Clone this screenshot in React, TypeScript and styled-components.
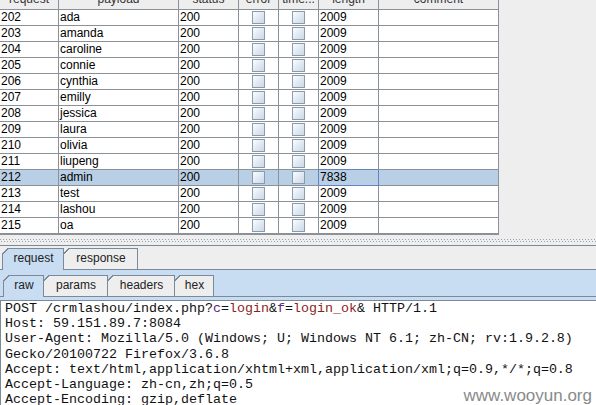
import React from 'react';
import styled, { createGlobalStyle } from 'styled-components';

const Global = createGlobalStyle`
  html, body { margin: 0; padding: 0; background: #eeeeee; }
  body { width: 596px; height: 405px; overflow: hidden; }
`;

const BORDER = '#7a8a99';
const GRID = '#8a9199';
const BLUE = '#c8ddf2';

const Frame = styled.div`
  position: relative;
  width: 596px;
  height: 405px;
  overflow: hidden;
  background: #eeeeee;
  display: flex;
  flex-direction: column;
  font-family: "Liberation Sans", Arial, sans-serif;
`;

const TableArea = styled.div`
  height: 235px;
  flex: none;
  overflow: hidden;
`;

const Grid = styled.div`
  width: 499px;
  margin-top: -10px;
  display: grid;
  grid-template-columns: 59px 120px 60px 40px 40px 60px 120px;
  border-bottom: 1px solid ${GRID};
`;

const HeadCell = styled.div`
  height: 19px;
  border-right: 1px solid ${GRID};
  border-bottom: 1px solid ${GRID};
  background: #eeeeee;
  color: #333;
  font-size: 12px;
  line-height: 19px;
  text-align: center;
  white-space: nowrap;
  overflow: hidden;
`;

const Cell = styled.div<{ $sel?: boolean; $focus?: boolean; $center?: boolean }>`
  position: relative;
  height: 15px;
  border-right: 1px solid ${(p) => (p.$focus ? '#6382bf' : GRID)};
  border-bottom: 1px solid ${(p) => (p.$focus ? '#6382bf' : GRID)};
  background: ${(p) => (p.$sel ? '#b8cfe5' : '#ffffff')};
  box-shadow: ${(p) => (p.$focus ? '-1px -1px 0 0 #6382bf' : 'none')};
  z-index: ${(p) => (p.$focus ? 1 : 0)};
  color: #000;
  font-size: 12px;
  line-height: 15px;
  padding-left: 1px;
  white-space: nowrap;
  overflow: ${(p) => (p.$focus ? 'visible' : 'hidden')};
  display: ${(p) => (p.$center ? 'flex' : 'block')};
  align-items: center;
  justify-content: center;
`;

const Check = styled.span`
  display: block;
  width: 11px;
  height: 11px;
  margin-left: -1px;
  border: 1px solid #8b9bab;
  background: linear-gradient(135deg, #fbfdff 0%, #e4ecf5 45%, #c9d8e8 100%);
`;

const Splitter = styled.div`
  height: 10px;
  flex: none;
  border-bottom: 1px solid ${BORDER};
  padding-top: 4px;
  box-sizing: border-box;
  height: 11px;
`;

const Bumps = styled.div`
  height: 3px;
  background:
    repeating-linear-gradient(90deg, #9aa0a6 0 1px, transparent 1px 3px) 0 0 / 100% 1px no-repeat,
    repeating-linear-gradient(90deg, #9aa0a6 0 1px, transparent 1px 3px) 1px 2px / 100% 1px no-repeat;
`;

const TabStrip = styled.div<{ $h: number; $pad: number }>`
  display: flex;
  align-items: flex-end;
  height: ${(p) => p.$h}px;
  padding-left: ${(p) => p.$pad}px;
  flex: none;
  position: relative;
  z-index: 2;
`;

const Tab = styled.div<{ $active?: boolean; $w: number }>`
  width: ${(p) => p.$w}px;
  height: ${(p) => (p.$active ? 22 : 21)}px;
  margin-bottom: ${(p) => (p.$active ? -1 : 0)}px;
  margin-right: -1px;
  box-sizing: border-box;
  padding: 1px 1px 0 1px;
  background: linear-gradient(135deg, transparent 4.2px, ${BORDER} 4.2px);
  flex: none;
`;

const TabFace = styled.div<{ $active?: boolean }>`
  height: 100%;
  background: linear-gradient(
    135deg,
    transparent 3.8px,
    ${(p) => (p.$active ? BLUE : '#eeeeee')} 3.8px
  );
  color: #222;
  font-size: 12px;
  line-height: 19px;
  text-align: center;
  white-space: nowrap;
  padding-left: 1px;
`;

const Content = styled.div<{ $pt: number }>`
  border-top: 1px solid ${BORDER};
  background: ${BLUE};
  padding-top: ${(p) => p.$pt}px;
  display: flex;
  flex-direction: column;
  flex: 1;
  min-height: 0;
`;

const TextArea = styled.div`
  flex: 1;
  background: #ffffff;
  border-top: 1px solid ${BORDER};
  border-left: 1px solid ${BORDER};
  padding-left: 4px;
  font-family: "Liberation Mono", "Courier New", monospace;
  font-size: 13.33px;
  line-height: 15.2px;
  color: #111;
  white-space: pre;
`;

const Line = styled.div``;

const Name = styled.span`
  color: #5b2a75;
`;
const Val = styled.span`
  color: #8b1f1f;
`;

const Watermark = styled.div`
  position: absolute;
  right: 4px;
  bottom: 0px;
  font-family: "Liberation Sans", Arial, sans-serif;
  font-size: 17px;
  line-height: 19px;
  color: #8a8a8a;
`;

const rows: [string, string, string][] = [
  ['202', 'ada', '2009'],
  ['203', 'amanda', '2009'],
  ['204', 'caroline', '2009'],
  ['205', 'connie', '2009'],
  ['206', 'cynthia', '2009'],
  ['207', 'emilly', '2009'],
  ['208', 'jessica', '2009'],
  ['209', 'laura', '2009'],
  ['210', 'olivia', '2009'],
  ['211', 'liupeng', '2009'],
  ['212', 'admin', '7838'],
  ['213', 'test', '2009'],
  ['214', 'lashou', '2009'],
  ['215', 'oa', '2009'],
];

const headers = ['request', 'payload', 'status', 'error', 'time...', 'length', 'comment'];

export default function App() {
  return (
    <Frame>
      <Global />
      <TableArea>
        <Grid>
          {headers.map((h) => (
            <HeadCell key={h}>{h}</HeadCell>
          ))}
          {rows.map(([id, name, len]) => {
            const sel = id === '212';
            return (
              <React.Fragment key={id}>
                <Cell $sel={sel}>{id}</Cell>
                <Cell $sel={sel}>{name}</Cell>
                <Cell $sel={sel}>200</Cell>
                <Cell $sel={sel} $center>
                  <Check />
                </Cell>
                <Cell $sel={sel} $center>
                  <Check />
                </Cell>
                <Cell $sel={sel} $focus={sel}>
                  {len}
                </Cell>
                <Cell $sel={sel}></Cell>
              </React.Fragment>
            );
          })}
        </Grid>
      </TableArea>
      <Splitter>
        <Bumps />
      </Splitter>
      <TabStrip $h={23} $pad={2}>
        <Tab $active $w={62}>
          <TabFace $active>request</TabFace>
        </Tab>
        <Tab $w={75}>
          <TabFace>response</TabFace>
        </Tab>
      </TabStrip>
      <Content $pt={5}>
        <TabStrip $h={21} $pad={3}>
          <Tab $active $w={41}>
            <TabFace $active>raw</TabFace>
          </Tab>
          <Tab $w={65}>
            <TabFace>params</TabFace>
          </Tab>
          <Tab $w={68}>
            <TabFace>headers</TabFace>
          </Tab>
          <Tab $w={40}>
            <TabFace>hex</TabFace>
          </Tab>
        </TabStrip>
        <Content $pt={3}>
          <TextArea>
            <Line>
              POST /crmlashou/index.php?<Name>c</Name>=<Val>login</Val>&amp;<Name>f</Name>=
              <Val>login_ok</Val>&amp; HTTP/1.1
            </Line>
            <Line>Host: 59.151.89.7:8084</Line>
            <Line>User-Agent: Mozilla/5.0 (Windows; U; Windows NT 6.1; zh-CN; rv:1.9.2.8)</Line>
            <Line>Gecko/20100722 Firefox/3.6.8</Line>
            <Line>Accept: text/html,application/xhtml+xml,application/xml;q=0.9,*/*;q=0.8</Line>
            <Line>Accept-Language: zh-cn,zh;q=0.5</Line>
            <Line>Accept-Encoding: gzip,deflate</Line>
          </TextArea>
        </Content>
      </Content>
      <Watermark>www.wooyun.org</Watermark>
    </Frame>
  );
}
